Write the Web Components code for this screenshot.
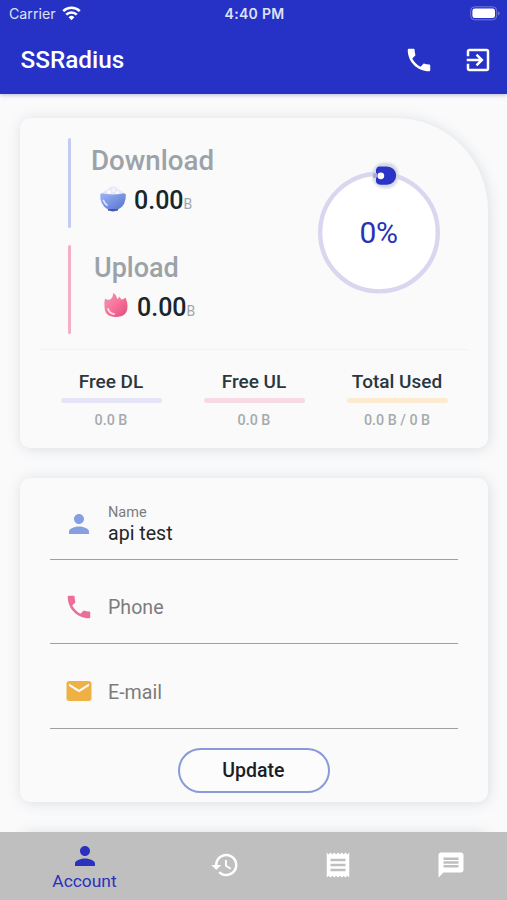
<!DOCTYPE html>
<html lang="en">
<head>
<meta charset="utf-8">
<title>SSRadius</title>
<style>
    html, body {
        margin: 0;
        height: 100%;
        overflow: hidden;
        font-family: Roboto, sans-serif;
    }
</style>
</head>
<body>
<radius-app></radius-app>

<script>
const ICONS = {
    phone: 'M6.62 10.79c1.44 2.83 3.76 5.14 6.59 6.59l2.2-2.2c.27-.27.67-.36 1.02-.24 1.12.37 2.33.57 3.57.57.55 0 1 .45 1 1V20c0 .55-.45 1-1 1-9.39 0-17-7.61-17-17 0-.55.45-1 1-1h3.5c.55 0 1 .45 1 1 0 1.25.2 2.45.57 3.57.11.35.03.74-.25 1.02l-2.2 2.2z',
    exit: 'M10.09 15.59L11.5 17l5-5-5-5-1.41 1.41L12.67 11H3v2h9.67l-2.58 2.59zM19 3H5c-1.11 0-2 .9-2 2v4h2V5h14v14H5v-4H3v4c0 1.1.89 2 2 2h14c1.1 0 2-.9 2-2V5c0-1.1-.9-2-2-2z',
    person: 'M12 12c2.21 0 4-1.79 4-4s-1.79-4-4-4-4 1.79-4 4 1.79 4 4 4zm0 2c-2.67 0-8 1.34-8 4v2h16v-2c0-2.66-5.33-4-8-4z',
    mail: 'M20 4H4c-1.1 0-1.99.9-1.99 2L2 18c0 1.1.9 2 2 2h16c1.1 0 2-.9 2-2V6c0-1.1-.9-2-2-2zm0 4l-8 5-8-5V6l8 5 8-5v2z',
    history: 'M13 3c-4.97 0-9 4.03-9 9H1l3.89 3.89.07.14L9 12H6c0-3.87 3.13-7 7-7s7 3.13 7 7-3.13 7-7 7c-1.93 0-3.68-.79-4.94-2.06l-1.42 1.42C8.27 19.99 10.51 21 13 21c4.97 0 9-4.03 9-9s-4.03-9-9-9zm-1 5v5l4.28 2.54.72-1.21-3.5-2.08V8H12z',
    receipt: 'M18 17H6v-2h12v2zm0-4H6v-2h12v2zm0-4H6V7h12v2zM3 22l1.5-1.5L6 22l1.5-1.5L9 22l1.5-1.5L12 22l1.5-1.5L15 22l1.5-1.5L18 22l1.5-1.5L21 22V2l-1.5 1.5L18 2l-1.5 1.5L15 2l-1.5 1.5L12 2l-1.5 1.5L9 2 7.5 3.5 6 2 4.5 3.5 3 2v20z',
    message: 'M20 2H4c-1.1 0-1.99.9-1.99 2L2 22l4-4h14c1.1 0 2-.9 2-2V4c0-1.1-.9-2-2-2zm-2 12H6v-2h12v2zm0-3H6V9h12v2zm0-3H6V6h12v2z'
};

class MdIcon extends HTMLElement {
    constructor() {
        super();
        this.attachShadow({ mode: 'open' });
        this.shadowRoot.innerHTML = `
            <style>
                :host { display: block; width: 30px; height: 30px; flex: none; }
                svg { display: block; width: 100%; height: 100%; fill: currentColor; }
            </style>
            <svg viewBox="0 0 24 24"><path></path></svg>
        `;
    }

    connectedCallback() {
        this.shadowRoot.querySelector('path').setAttribute('d', ICONS[this.getAttribute('name')]);
    }
}

class StatusBar extends HTMLElement {
    constructor() {
        super();
        this.attachShadow({ mode: 'open' });
        this.shadowRoot.innerHTML = `
            <style>
                :host {
                    display: grid;
                    grid-template-columns: 1fr auto 1fr;
                    align-items: center;
                    height: 27px;
                    padding: 0 7px 0 9px;
                    color: #dfe1f8;
                    font: 400 14.2px Inter, sans-serif;
                }
                .left { display: flex; align-items: center; gap: 6px; }
                .time { font-weight: 600; font-size: 14px; letter-spacing: .3px; }
                .battery { justify-self: end; }
                svg { display: block; }
            </style>
            <div class="left">
                <span>Carrier</span>
                <svg width="19" height="15" viewBox="0 0 19 15" fill="none" stroke="#fff" stroke-width="2.5">
                    <path d="M1.2 5.2a11.8 11.8 0 0 1 16.6 0"/>
                    <path d="M4.2 8.6a7.5 7.5 0 0 1 10.6 0"/>
                    <path d="M9.5 14.3L6.6 11.3a4.1 4.1 0 0 1 5.8 0z" fill="#fff" stroke="none"/>
                </svg>
            </div>
            <span class="time">4:40 PM</span>
            <svg class="battery" width="30" height="15" viewBox="0 0 30 15">
                <rect x=".7" y=".8" width="26" height="13" rx="4" fill="none" stroke="#7378d8"/>
                <rect x="2.4" y="2.5" width="22.6" height="9.6" rx="2.4" fill="#fff"/>
                <path d="M28 5.2q1.6 .8 1.6 2.1t-1.6 2.1z" fill="#7378d8"/>
            </svg>
        `;
    }
}

class AppHeader extends HTMLElement {
    constructor() {
        super();
        this.attachShadow({ mode: 'open' });
        this.shadowRoot.innerHTML = `
            <style>
                :host {
                    display: block;
                    position: relative;
                    z-index: 1;
                    height: 93.5px;
                    background: #2632c5;
                    color: #fff;
                    box-shadow: 0 1px 4px rgba(30, 40, 120, .3);
                }
                .bar {
                    display: flex;
                    align-items: center;
                    gap: 28.5px;
                    height: 65px;
                    padding: 0 14.5px 0 20.5px;
                }
                h1 { flex: 1; margin: 0; font-size: 24.3px; font-weight: 500; line-height: 30px; }
            </style>
            <status-bar></status-bar>
            <div class="bar">
                <h1></h1>
                <slot></slot>
            </div>
        `;
    }

    connectedCallback() {
        this.shadowRoot.querySelector('h1').textContent = this.getAttribute('heading');
    }
}

class SurfaceCard extends HTMLElement {
    constructor() {
        super();
        this.attachShadow({ mode: 'open' });
        this.shadowRoot.innerHTML = `
            <style>
                :host {
                    display: block;
                    box-sizing: border-box;
                    flex: none;
                    border-radius: 10px;
                    background: #fafafb;
                    box-shadow: 1px 1px 13px rgba(58, 81, 96, .17);
                }
            </style>
            <slot></slot>
        `;
    }
}

class TrafficRow extends HTMLElement {
    constructor() {
        super();
        this.attachShadow({ mode: 'open' });
        this.shadowRoot.innerHTML = `
            <style>
                :host { display: flex; height: 89.5px; }
                .line { width: 3px; border-radius: 3px; background: var(--line); }
                .text { padding: 6px 0 0 var(--indent, 20px); }
                .label { font-size: var(--label-size, 27px); line-height: 34px; font-weight: 500; color: #9ca3a8; }
                .amount { display: flex; align-items: flex-start; gap: 7px; padding: 4px 0 0 8px; }
                ::slotted(svg) { margin-top: 3px; }
                .value { font-size: 25px; font-weight: 500; color: #17262a; line-height: 38px; white-space: nowrap; }
                .unit { font-size: 14px; font-weight: 400; color: #a0a6a9; }
            </style>
            <div class="line"></div>
            <div class="text">
                <div class="label"></div>
                <div class="amount">
                    <slot></slot>
                    <div class="value"><span class="number"></span><span class="unit">B</span></div>
                </div>
            </div>
        `;
    }

    connectedCallback() {
        this.shadowRoot.querySelector('.label').textContent = this.getAttribute('label');
        this.shadowRoot.querySelector('.number').textContent = this.getAttribute('value');
    }
}

class UsageRing extends HTMLElement {
    constructor() {
        super();
        this.attachShadow({ mode: 'open' });
        this.shadowRoot.innerHTML = `
            <style>
                :host { display: block; width: 122px; height: 132px; }
                svg { display: block; overflow: visible; }
                text { font: 400 30px Roboto, sans-serif; letter-spacing: -.4px; fill: #2a31b4; }
            </style>
            <svg width="122" height="132" viewBox="0 -10 122 132">
                <defs>
                    <filter id="halo" x="-50%" y="-50%" width="200%" height="200%">
                        <feGaussianBlur stdDeviation="1.1"/>
                    </filter>
                </defs>
                <circle cx="61" cy="60.6" r="58.8" fill="#fff" stroke="#d9d7f0" stroke-width="4.4"/>
                <rect x="54.5" y="-9.3" width="26" height="25.5" rx="11.5" fill="#d5dae2" filter="url(#halo)"/>
                <path d="M61 -5.6h8a9.2 9.2 0 0 1 0 18.4H63q-4 0-5-3V-2.6q1-3 3-3z" fill="#2a35c8"/>
                <path d="M55 1.6l4-.6v4.6l-4 .5z" fill="#a9a8e4"/>
                <circle cx="62.8" cy="3.8" r="3.4" fill="#fff"/>
                <text x="60.5" y="70.8" text-anchor="middle"></text>
            </svg>
        `;
    }

    connectedCallback() {
        this.shadowRoot.querySelector('text').textContent = this.getAttribute('percent') + '%';
    }
}

class QuotaItem extends HTMLElement {
    constructor() {
        super();
        this.attachShadow({ mode: 'open' });
        this.shadowRoot.innerHTML = `
            <style>
                :host { display: flex; flex-direction: column; align-items: center; flex: 1; }
                .label { font-size: 19px; font-weight: 500; line-height: 24px; color: #2b373b; white-space: nowrap; }
                .track { width: 101px; height: 5.5px; margin: 4px 0 8px; border-radius: 4px; background: var(--track); }
                .value { font-size: 14.3px; font-weight: 500; line-height: 18px; color: #a6abad; }
            </style>
            <div class="label"></div>
            <div class="track"></div>
            <div class="value"></div>
        `;
    }

    connectedCallback() {
        this.shadowRoot.querySelector('.label').textContent = this.getAttribute('label');
        this.shadowRoot.querySelector('.value').textContent = this.getAttribute('value');
    }
}

class FormField extends HTMLElement {
    constructor() {
        super();
        this.attachShadow({ mode: 'open' });
        this.shadowRoot.innerHTML = `
            <style>
                :host {
                    display: flex;
                    align-items: center;
                    gap: 14.5px;
                    box-sizing: border-box;
                    height: 84.4px;
                    padding: 0 0 0 14px;
                    border-bottom: 1.4px solid #a0a0a0;
                }
                md-icon { color: var(--accent); margin-top: 11px; }
                .text { padding-top: 13.5px; }
                .text.filled { padding-top: 12px; }
                .label { font-size: 19.6px; line-height: 24px; color: #7c7c7c; }
                .filled .label { font-size: 14.5px; line-height: 19px; }
                .value { font-size: 19.6px; line-height: 24px; color: #252525; }
                .value:empty { display: none; }
            </style>
            <md-icon></md-icon>
            <div class="text">
                <div class="label"></div>
                <div class="value"></div>
            </div>
        `;
    }

    connectedCallback() {
        const value = this.getAttribute('value') || '';
        this.shadowRoot.querySelector('.label').textContent = this.getAttribute('label');
        this.shadowRoot.querySelector('.value').textContent = value;
        this.shadowRoot.querySelector('.text').classList.toggle('filled', value !== '');
        this.shadowRoot.querySelector('md-icon').setAttribute('name', this.getAttribute('icon'));
    }
}

class PillButton extends HTMLElement {
    constructor() {
        super();
        this.attachShadow({ mode: 'open' });
        this.shadowRoot.innerHTML = `
            <style>
                :host { display: block; }
                button {
                    display: block;
                    width: 152px;
                    height: 45px;
                    padding: 0 1px 0 0;
                    border: 2.4px solid #869bd8;
                    border-radius: 23px;
                    background: #fcfcfd;
                    color: #1d1d1f;
                    font: 500 19.5px Roboto, sans-serif;
                }
            </style>
            <button><slot></slot></button>
        `;
    }
}

class NavTab extends HTMLElement {
    constructor() {
        super();
        this.attachShadow({ mode: 'open' });
        this.shadowRoot.innerHTML = `
            <style>
                :host {
                    display: flex;
                    flex-direction: column;
                    align-items: center;
                    justify-content: center;
                    flex: 1;
                    padding-bottom: 2px;
                    color: #fff;
                }
                :host([active]) { flex: 1.5; padding-bottom: 0; color: #2a31bd; }
                .label { font-size: 17.4px; line-height: 20px; }
                .label:empty { display: none; }
            </style>
            <md-icon></md-icon>
            <div class="label"></div>
        `;
    }

    connectedCallback() {
        this.shadowRoot.querySelector('md-icon').setAttribute('name', this.getAttribute('icon'));
        this.shadowRoot.querySelector('.label').textContent = this.getAttribute('label') || '';
    }
}

class RadiusApp extends HTMLElement {
    constructor() {
        super();
        this.attachShadow({ mode: 'open' });
        this.shadowRoot.innerHTML = `
            <style>
                :host {
                    display: flex;
                    flex-direction: column;
                    width: 507px;
                    height: 900px;
                    overflow: hidden;
                    background: #fafafb;
                }
                app-header { flex: none; }
                main {
                    flex: 1;
                    min-height: 0;
                    overflow: hidden;
                    display: flex;
                    flex-direction: column;
                    gap: 29.5px;
                    padding: 24.5px 19.5px 0 20px;
                }
                .usage { height: 330px; border-top-right-radius: 92px; padding: 20px 19px 0 19.5px; }
                .top { display: flex; justify-content: space-between; height: 210.6px; padding: 0 28.5px; border-bottom: 1.5px solid #f3f3f6; }
                .rows { display: flex; flex-direction: column; gap: 17px; }
                .down { --line: #c3cbf0; --label-size: 27.7px; }
                .up { --line: #f3afc6; --indent: 23px; }
                usage-ring { margin-top: 23.5px; }
                .quotas { display: flex; padding-top: 20px; }
                .art { display: block; }
                .profile { height: 324.5px; padding: 0 29.5px; }
                form-field:first-child { height: 82.4px; --accent: #869fe0; }
                pill-button { width: 152px; margin: 19px auto 0; }
                .next { height: 200px; }
                nav { flex: none; display: flex; height: 68.5px; background: #bfbfbf; }
            </style>
            <app-header heading="SSRadius">
                <md-icon name="phone"></md-icon>
                <md-icon name="exit"></md-icon>
            </app-header>
            <main>
                <surface-card class="usage">
                    <div class="top">
                        <div class="rows">
                            <traffic-row class="down" label="Download" value="0.00">
                                <svg class="art" width="28" height="28" viewBox="0 0 28 28">
                                    <defs>
                                        <linearGradient id="bowl" x1="0" y1="0" x2="1" y2="1">
                                            <stop offset="0" stop-color="#9db6f5"/>
                                            <stop offset="1" stop-color="#5670cf"/>
                                        </linearGradient>
                                    </defs>
                                    <path d="M3 9q2-4 6-4.500 1-3 5-3t5 3q4 .5 6 4.500L14 13z" fill="#e3eaf6"/>
                                    <circle cx="10" cy="7" r="2" fill="#f8f9fc"/>
                                    <circle cx="14.500" cy="5" r="2" fill="#f3f5fa"/>
                                    <circle cx="18.500" cy="7.500" r="1.8" fill="#f8f9fc"/>
                                    <path d="M1.2 9.200Q3 7.500 5.500 8.800q8.500 1.500 17 0 2.500-1.300 4.300.4.600 11-7.800 15.300H9Q.6 20 1.200 9.200z" fill="url(#bowl)"/>
                                    <path d="M9 24h10v1.600q-5 1.600-10 0z" fill="#4656a8"/>
                                    <path d="M4.500 15.500q1.200 3 3.500 4.500" fill="none" stroke="#dbe5ff" stroke-width="1.700" stroke-linecap="round"/>
                                </svg>
                            </traffic-row>
                            <traffic-row class="up" label="Upload" value="0.00">
                                <svg class="art" width="28" height="28" viewBox="0 0 28 28">
                                    <defs>
                                        <linearGradient id="flame" x1="0" y1="0" x2="1" y2="1">
                                            <stop offset="0" stop-color="#e5a0b2"/>
                                            <stop offset=".5" stop-color="#fa719b"/>
                                            <stop offset="1" stop-color="#d94c80"/>
                                        </linearGradient>
                                    </defs>
                                    <path d="M3 6.500q2.500 2 5 1 3-1.500 3.200-6.500 3.300 1.500 4 6 1.500 0 1.800-2.500 1.500 1.500 2.500 3 2 0 4-2Q25.500 10 25.500 14 25.500 25 14 25T2.500 14.500Q2 9.500 3 6.500z" fill="url(#flame)"/>
                                    <path d="M6 17q1.500 4.500 6 5" fill="none" stroke="#ffe3ec" stroke-width="1.800" stroke-linecap="round"/>
                                </svg>
                            </traffic-row>
                        </div>
                        <usage-ring percent="0"></usage-ring>
                    </div>
                    <div class="quotas">
                        <quota-item label="Free DL" value="0.0 B" style="--track: #e6e5f8"></quota-item>
                        <quota-item label="Free UL" value="0.0 B" style="--track: #f8dae6"></quota-item>
                        <quota-item label="Total Used" value="0.0 B / 0 B" style="--track: #fcebd1"></quota-item>
                    </div>
                </surface-card>
                <surface-card class="profile">
                    <form-field icon="person" label="Name" value="api test"></form-field>
                    <form-field icon="phone" label="Phone" style="--accent: #ea6f9b"></form-field>
                    <form-field icon="mail" label="E-mail" style="--accent: #efb044"></form-field>
                    <pill-button>Update</pill-button>
                </surface-card>
                <surface-card class="next"></surface-card>
            </main>
            <nav>
                <nav-tab icon="person" label="Account" active></nav-tab>
                <nav-tab icon="history"></nav-tab>
                <nav-tab icon="receipt"></nav-tab>
                <nav-tab icon="message"></nav-tab>
            </nav>
        `;
    }
}

customElements.define('status-bar', StatusBar);
customElements.define('app-header', AppHeader);
customElements.define('surface-card', SurfaceCard);
customElements.define('traffic-row', TrafficRow);
customElements.define('usage-ring', UsageRing);
customElements.define('quota-item', QuotaItem);
customElements.define('form-field', FormField);
customElements.define('pill-button', PillButton);
customElements.define('nav-tab', NavTab);
customElements.define('radius-app', RadiusApp);
// last, so that every icon already has its name attribute when it is upgraded
customElements.define('md-icon', MdIcon);
</script>
</body>
</html>
